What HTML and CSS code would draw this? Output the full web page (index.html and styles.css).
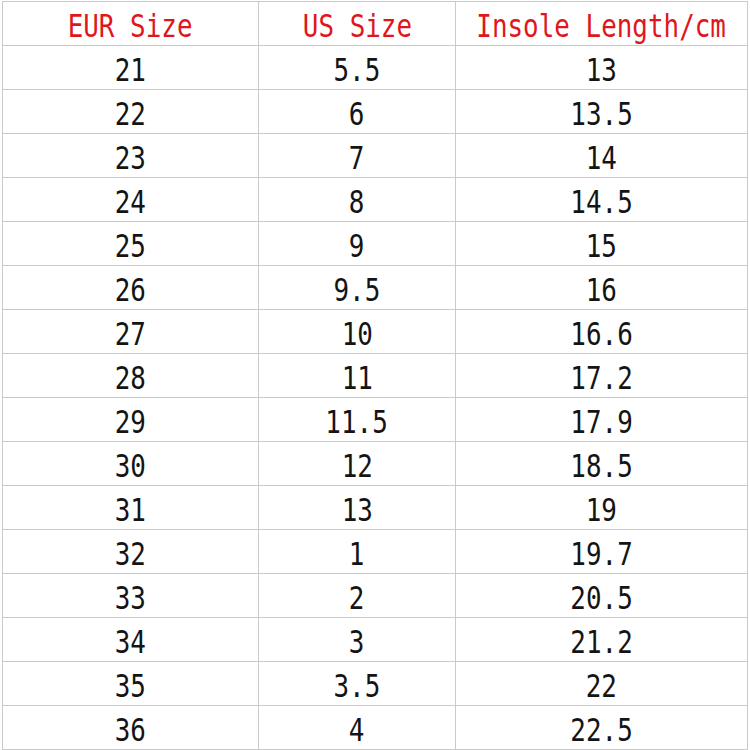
FILE: index.html
```html
<!DOCTYPE html>
<html>
<head>
<meta charset="utf-8">
<link rel="stylesheet" href="styles.css">
</head>
<body>
<table class="size-table">
  <colgroup>
    <col class="col-eur">
    <col class="col-us">
    <col class="col-len">
  </colgroup>
  <thead>
    <tr><th><span class="t">EUR Size</span></th><th><span class="t">US Size</span></th><th><span class="t">Insole Length/cm</span></th></tr>
  </thead>
  <tbody>
    <tr><td><span class="t">21</span></td><td><span class="t">5.5</span></td><td><span class="t">13</span></td></tr>
    <tr><td><span class="t">22</span></td><td><span class="t">6</span></td><td><span class="t">13.5</span></td></tr>
    <tr><td><span class="t">23</span></td><td><span class="t">7</span></td><td><span class="t">14</span></td></tr>
    <tr><td><span class="t">24</span></td><td><span class="t">8</span></td><td><span class="t">14.5</span></td></tr>
    <tr><td><span class="t">25</span></td><td><span class="t">9</span></td><td><span class="t">15</span></td></tr>
    <tr><td><span class="t">26</span></td><td><span class="t">9.5</span></td><td><span class="t">16</span></td></tr>
    <tr><td><span class="t">27</span></td><td><span class="t">10</span></td><td><span class="t">16.6</span></td></tr>
    <tr><td><span class="t">28</span></td><td><span class="t">11</span></td><td><span class="t">17.2</span></td></tr>
    <tr><td><span class="t">29</span></td><td><span class="t">11.5</span></td><td><span class="t">17.9</span></td></tr>
    <tr><td><span class="t">30</span></td><td><span class="t">12</span></td><td><span class="t">18.5</span></td></tr>
    <tr><td><span class="t">31</span></td><td><span class="t">13</span></td><td><span class="t">19</span></td></tr>
    <tr><td><span class="t">32</span></td><td><span class="t">1</span></td><td><span class="t">19.7</span></td></tr>
    <tr><td><span class="t">33</span></td><td><span class="t">2</span></td><td><span class="t">20.5</span></td></tr>
    <tr><td><span class="t">34</span></td><td><span class="t">3</span></td><td><span class="t">21.2</span></td></tr>
    <tr><td><span class="t">35</span></td><td><span class="t">3.5</span></td><td><span class="t">22</span></td></tr>
    <tr><td><span class="t">36</span></td><td><span class="t">4</span></td><td><span class="t">22.5</span></td></tr>
  </tbody>
</table>
</body>
</html>
```

FILE: styles.css
```css
html, body {
  margin: 0;
  padding: 0;
  background: #ffffff;
}

.size-table {
  margin: 1px 0 0 2px;
  width: 745px;
  height: 746px;
  border-collapse: collapse;
  table-layout: fixed;
  font-family: "DejaVu Sans Mono", "Liberation Mono", monospace;
  font-size: 32px;
  color: #141414;
}

.col-eur { width: 256px; }
.col-us { width: 197px; }
.col-len { width: 292px; }

.size-table th,
.size-table td {
  border: 1px solid #cacaca;
  padding: 5px 0 0 0;
  height: 38px;
  text-align: center;
  vertical-align: middle;
  font-weight: normal;
  line-height: 36px;
  white-space: nowrap;
  overflow: visible;
}

.size-table th {
  color: #e0161c;
}

.t {
  display: inline-block;
  margin: 0 -40px;
  transform: scaleX(0.81);
}
```
